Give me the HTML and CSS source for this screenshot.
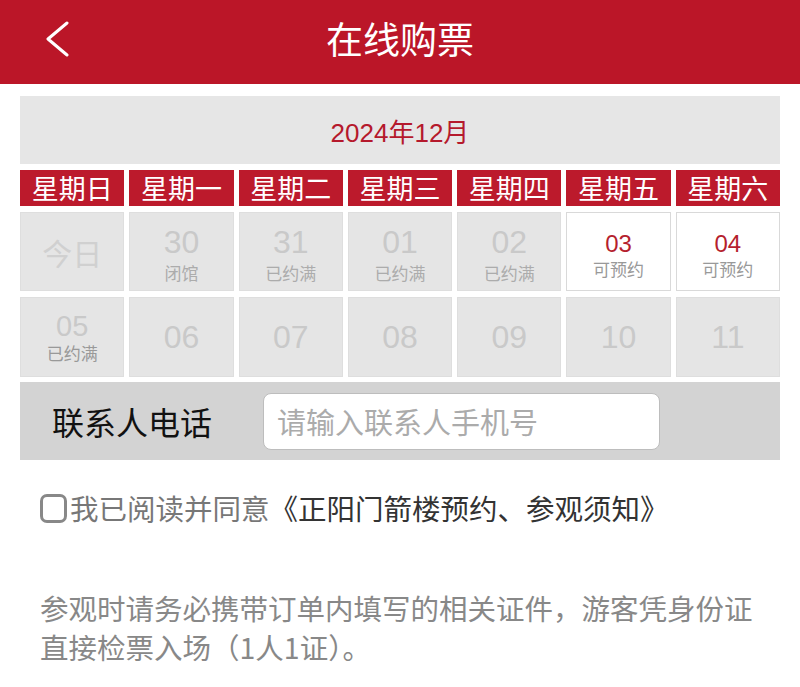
FILE: index.html
```html
<!DOCTYPE html>
<html lang="zh-CN">
<head>
<meta charset="utf-8">
<title>在线购票</title>
<link rel="stylesheet" href="styles.css">
</head>
<body>
<header class="topbar">
  <div class="back">
    <svg width="24" height="36" viewBox="0 0 24 36"><path d="M22 2 L3 18 L22 34" fill="none" stroke="#fff" stroke-width="3" stroke-linecap="round" stroke-linejoin="round"/></svg>
  </div>
  <h1 class="title">在线购票</h1>
  <div></div>
</header>
<main class="content">
  <div class="month">2024年12月</div>
  <div class="calendar">
    <div class="wk">星期日</div>
    <div class="wk">星期一</div>
    <div class="wk">星期二</div>
    <div class="wk">星期三</div>
    <div class="wk">星期四</div>
    <div class="wk">星期五</div>
    <div class="wk">星期六</div>

    <div class="day off"><span class="today">今日</span></div>
    <div class="day off"><span class="num">30</span><span class="lbl">闭馆</span></div>
    <div class="day off"><span class="num">31</span><span class="lbl">已约满</span></div>
    <div class="day off"><span class="num">01</span><span class="lbl">已约满</span></div>
    <div class="day off"><span class="num">02</span><span class="lbl">已约满</span></div>
    <div class="day on"><span class="num">03</span><span class="lbl">可预约</span></div>
    <div class="day on"><span class="num">04</span><span class="lbl">可预约</span></div>

    <div class="day off r2"><span class="num sm">05</span><span class="lbl dk">已约满</span></div>
    <div class="day off r2"><span class="num solo">06</span></div>
    <div class="day off r2"><span class="num solo">07</span></div>
    <div class="day off r2"><span class="num solo">08</span></div>
    <div class="day off r2"><span class="num solo">09</span></div>
    <div class="day off r2"><span class="num solo">10</span></div>
    <div class="day off r2"><span class="num solo">11</span></div>
  </div>
  <div class="contact">
    <span class="clabel">联系人电话</span>
    <div class="input">请输入联系人手机号</div>
  </div>
</main>
<div class="agree">
  <span class="box"></span>
  <span class="agree-text">我已阅读并同意<span class="link">《正阳门箭楼预约、参观须知》</span></span>
</div>
<p class="notice">参观时请务必携带订单内填写的相关证件，游客凭身份证直接检票入场（1人1证）。</p>
</body>
</html>
```
FILE: styles.css
```css
* { box-sizing: border-box; }
body {
  margin: 0;
  background: #fff;
  font-family: "Liberation Sans", "Noto Sans CJK SC", sans-serif;
}
.topbar {
  height: 84px;
  background: #bb1628;
  display: grid;
  grid-template-columns: 1fr auto 1fr;
  align-items: center;
}
.back {
  padding-left: 45px;
  padding-bottom: 6px;
  display: flex;
  align-items: center;
}
.title {
  margin: 0;
  color: #fff;
  font-family: "Noto Sans CJK SC", sans-serif;
  font-weight: 400;
  font-size: 37px;
  line-height: 1;
  padding-bottom: 8px;
}
.content {
  padding: 12px 20px 0;
}
.month {
  height: 68px;
  background: #e6e6e6;
  color: #b5192c;
  font-size: 26px;
  display: flex;
  align-items: center;
  justify-content: center;
}
.calendar {
  margin-top: 6px;
  display: grid;
  grid-template-columns: repeat(7, 1fr);
  column-gap: 5px;
  row-gap: 6px;
}
.wk {
  height: 36px;
  background: #bc1a2c;
  color: #fff;
  font-family: "Noto Sans CJK SC", sans-serif;
  font-size: 27px;
  line-height: 36px;
  text-align: center;
}
.day {
  height: 79px;
  display: flex;
  flex-direction: column;
  align-items: center;
  justify-content: center;
  padding-top: 5px;
}
.day.r2 { height: 80px; padding-top: 0; }
.off { background: #e5e5e5; border: 1px solid #dedede; }
.on { background: #fff; border: 1px solid #d9d9d9; }
.num {
  font-size: 32px;
  line-height: 32px;
  color: #c9c9c9;
}
.num.sm { font-size: 29px; line-height: 28px; }
.num.solo { font-size: 32px; }
.on .num { color: #b51f2e; font-size: 24px; line-height: 30px; }
.lbl {
  font-family: "Noto Sans CJK SC", sans-serif;
  font-size: 17px;
  line-height: 20px;
  color: #acacac;
  margin-top: 5px;
}
.lbl.dk { color: #999; margin-top: 3px; }
.on .lbl { color: #999; margin-top: 0; }
.today {
  font-family: "Noto Sans CJK SC", sans-serif;
  font-size: 30px;
  color: #d0d0d0;
  margin-top: -5px;
}
.contact {
  margin-top: 5px;
  height: 78px;
  background: #d3d3d3;
  display: flex;
  align-items: center;
  padding-left: 32px;
}
.clabel {
  font-family: "Noto Sans CJK SC", sans-serif;
  font-size: 32px;
  color: #111;
  width: 211px;
}
.input {
  width: 397px;
  height: 57px;
  background: #fff;
  border: 1px solid #bdbdbd;
  border-radius: 8px;
  padding-left: 13px;
  display: flex;
  align-items: center;
  font-family: "Noto Sans CJK SC", sans-serif;
  font-size: 29px;
  color: #ababab;
}
.agree {
  margin: 33px 40px 0;
  display: flex;
  align-items: center;
  height: 30px;
}
.box {
  width: 27px;
  height: 29px;
  border: 3px solid #888;
  border-radius: 7px;
  margin-right: 3px;
}
.agree-text {
  font-family: "Noto Sans CJK SC", sans-serif;
  font-size: 28.5px;
  color: #777;
  line-height: 30px;
}
.link { color: #333; }
.notice {
  margin: 65px 40px 0;
  font-family: "Noto Sans CJK SC", sans-serif;
  font-size: 28.5px;
  line-height: 39px;
  color: #888;
}
```
